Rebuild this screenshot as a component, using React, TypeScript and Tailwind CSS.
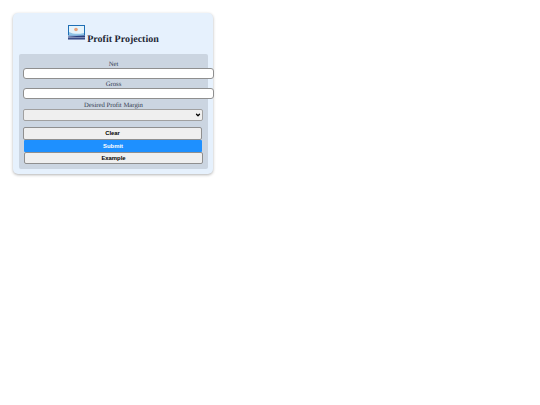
import { ChevronDown } from "lucide-react";

function Logo() {
  return (
    <svg width="17" height="15" viewBox="0 0 17 15" className="shrink-0">
      <rect x="0.5" y="0.5" width="16" height="9.5" fill="#e6f4fb" stroke="#1f6fb5" />
      <circle cx="8" cy="4.5" r="1.8" fill="#e8a27c" />
      <path d="M1 7 C5 9 10 9.5 16 8 V10 H1 Z" fill="#8fc3e6" />
      <path d="M0 11.5 L17 10.5 V14.5 H0 Z" fill="#2b3f7e" />
      <rect x="0" y="12.5" width="17" height="0.6" fill="#cfd8ea" />
    </svg>
  );
}

export default function App() {
  return (
    <div className="w-[540px] h-[405px] bg-white font-['Liberation_Serif',serif] [text-rendering:geometricPrecision] pt-[13px] pl-[13px]">
      <div className="w-[200px] h-[161px] bg-[#e6f1fd] rounded-[5px] shadow-[0_1px_3px_rgba(0,0,0,0.3)] pl-[6px] pt-[13px]">
        <div className="flex items-end justify-center w-[189px] h-[14px] gap-[2px] text-[#1f2937] font-bold">
          <Logo />
          <span className="text-[10px] leading-[12px] -mb-[6px]">Profit Projection</span>
        </div>
        <div className="mt-[14px] w-[189px] h-[115px] bg-[#cbd5e1] rounded-[2px] px-[4px] pt-[5px] text-[#374151] text-[6.7px]">
          <div className="text-center w-[181px] leading-[11px] h-[9px]">Net</div>
          <input className="block w-[191px] h-[11px] bg-white border border-[#8f8f8f] rounded-[3px]" />
          <div className="text-center w-[181px] leading-[11px] h-[9px]">Gross</div>
          <input className="block w-[191px] h-[11px] bg-white border border-[#8f8f8f] rounded-[3px]" />
          <div className="text-center w-[181px] leading-[13px] h-[10px]">Desired Profit Margin</div>
          <div className="flex items-center justify-end w-[180px] h-[12px] bg-[#efefef] border border-[#a0a0a0] rounded-[2px] pr-[1px]">
            <ChevronDown size={6} strokeWidth={5} className="text-black" />
          </div>
          <div className="mt-[6px] flex flex-col font-['Liberation_Sans',sans-serif] font-bold text-[5.9px] text-black">
            <button className="w-[179px] h-[13px] bg-[#efefef] border border-[#8f8f8f] rounded-[2px]">Clear</button>
            <button className="ml-[1px] w-[178px] h-[12px] bg-[#1e90ff] text-white rounded-[1px]">Submit</button>
            <button className="ml-[1px] w-[179px] h-[12px] bg-[#efefef] border border-[#8f8f8f] rounded-[2px]">Example</button>
          </div>
        </div>
      </div>
    </div>
  );
}
